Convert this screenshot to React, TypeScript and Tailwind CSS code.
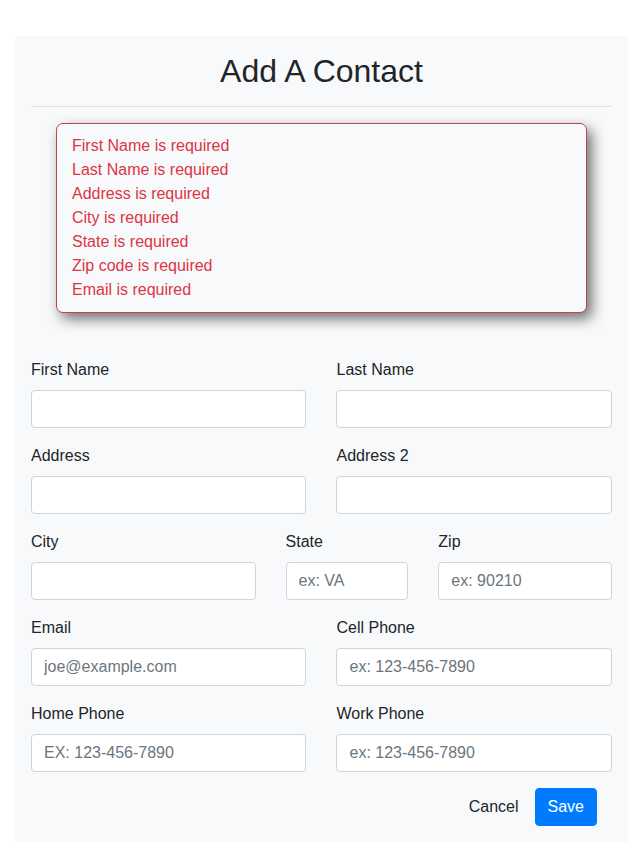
const ERRORS = [
  "First Name is required",
  "Last Name is required",
  "Address is required",
  "City is required",
  "State is required",
  "Zip code is required",
  "Email is required",
];

function Field({ label, placeholder, span }: { label: string; placeholder?: string; span: string }) {
  return (
    <div className={span + " mb-4"}>
      <label className="block mb-2 leading-6 text-[16px] text-[#212529]">{label}</label>
      <input
        placeholder={placeholder}
        className="block w-full h-[38px] px-3 bg-white border border-[#ced4da] rounded-[4px] text-[16px] text-[#495057] placeholder:text-[#6c757d] outline-none"
      />
    </div>
  );
}

export default function App() {
  return (
    <div className="min-h-[843px] bg-white pt-9 font-['Liberation_Sans',Arial,sans-serif]">
      <div className="ml-[15px] w-[613px] bg-[#f8f9fa] px-4 pt-4 pb-4">
        <h2 className="text-center text-[32px] leading-[38px] font-normal text-[#212529]">Add A Contact</h2>
        <hr className="mt-4 border-0 border-t border-[#dfe0e1]" />

        {/* validation summary */}
        <div className="mx-[25px] mt-4 mb-[45px] rounded-[7px] border border-[#c4424a] bg-[#f8f9fa] pl-[15px] pt-[10px] pb-[10px] shadow-[5px_6px_14px_rgba(0,0,0,0.55)]">
          {ERRORS.map((e) => (
            <div key={e} className="text-[16px] leading-6 text-[#dc3545]">
              {e}
            </div>
          ))}
        </div>

        <form className="grid grid-cols-12 gap-x-[30px]">
          <Field label="First Name" span="col-span-6" />
          <Field label="Last Name" span="col-span-6" />
          <Field label="Address" span="col-span-6" />
          <Field label="Address 2" span="col-span-6" />
          <Field label="City" span="col-span-5" />
          <Field label="State" placeholder="ex: VA" span="col-span-3" />
          <Field label="Zip" placeholder="ex: 90210" span="col-span-4" />
          <Field label="Email" placeholder="joe@example.com" span="col-span-6" />
          <Field label="Cell Phone" placeholder="ex: 123-456-7890" span="col-span-6" />
          <Field label="Home Phone" placeholder="EX: 123-456-7890" span="col-span-6" />
          <Field label="Work Phone" placeholder="ex: 123-456-7890" span="col-span-6" />

          <div className="col-span-12 flex justify-end gap-[4px] pr-[15px]">
            <button type="button" className="h-[38px] px-3 text-[16px] text-[#212529]">
              Cancel
            </button>
            <button type="button" className="h-[38px] px-3 rounded-[4px] bg-[#007bff] border border-[#007bff] text-[16px] text-white">
              Save
            </button>
          </div>
        </form>
      </div>
    </div>
  );
}
